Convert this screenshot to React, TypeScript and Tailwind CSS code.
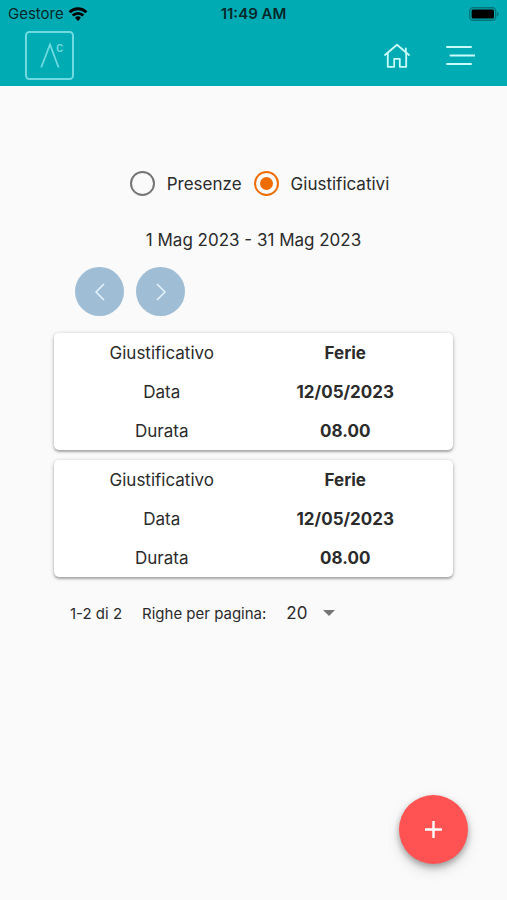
import { useState } from 'react'

interface Leave {
  id: number
  type: string
  date: string
  duration: string
}

const LEAVES: Leave[] = [
  { id: 1, type: 'Ferie', date: '12/05/2023', duration: '08.00' },
  { id: 2, type: 'Ferie', date: '12/05/2023', duration: '08.00' },
]

const VIEWS = ['Presenze', 'Giustificativi']

function StatusBar() {
  return (
    <div className="grid h-7 grid-cols-3 items-center px-2 text-[15px] text-[#06282b]">
      <div className="flex items-center gap-1">
        <span>Gestore</span>
        <svg viewBox="0 0 20 14" className="h-[14px] w-5" fill="none" stroke="#000" strokeWidth="2.8">
          <path d="M1.6 5.200a12 12 0 0 1 16.8 0" />
          <path d="M4.700 8.600a7.600 7.600 0 0 1 10.600 0" />
          <path d="M7 10.800a4.300 4.300 0 0 1 6 0L10 14z" fill="#000" stroke="none" />
        </svg>
      </div>
      <span className="text-center font-semibold">11:49 AM</span>
      <svg viewBox="0 0 30 14" className="h-[14px] w-[30px] justify-self-end">
        <rect x="0.7" y="0.7" width="26" height="12.6" rx="3.6" fill="none" stroke="#04747a" strokeWidth="1.4" />
        <rect x="2.6" y="2.4" width="22.4" height="9.2" rx="1.600" fill="#000" />
        <path d="M28 5v4c1-.4 1.7-1.1 1.7-2S29 5.400 28 5z" fill="#04747a" />
      </svg>
    </div>
  )
}

function Logo() {
  return (
    <svg viewBox="0 0 49 49" className="h-[49px] w-[49px]" fill="none" stroke="#6fdbe0">
      <rect x="1" y="1" width="47" height="47" rx="3.500" strokeWidth="2" />
      <path d="M16.200 36.500 25 13.500l8.600 23" strokeWidth="1.800" />
      <text x="31" y="20.500" fontSize="13" fontWeight="500" fill="#6fdbe0" stroke="none">c</text>
    </svg>
  )
}

function NavBar() {
  return (
    <div className="flex h-[58px] items-center justify-between pr-8 pb-[3px] pl-[25px]">
      <a href="#" aria-label="AC">
        <Logo />
      </a>
      <div className="flex items-center gap-[34px]">
        <a href="#" aria-label="Home">
          <svg viewBox="0 0 28 27" className="h-[27px] w-7" fill="none" stroke="#c9fbfd" strokeWidth="1.8" strokeLinecap="round" strokeLinejoin="round">
            <path d="M2 13 14 2.800 26 13" />
            <path d="M4.800 11v13.800h6.400v-7.900h5.600v7.900h6.400V11" />
            <path d="M22.800 9.500V6.500" />
          </svg>
        </a>
        <button type="button" aria-label="Menu">
          <svg viewBox="0 0 30 23" className="h-[23px] w-[30px]" stroke="#c9fbfd" strokeWidth="2" strokeLinecap="round">
            <path d="M2 3h24M5.500 11.500h24M2 20h24" />
          </svg>
        </button>
      </div>
    </div>
  )
}

function LeaveCard({ leave }: { leave: Leave }) {
  const rows = [
    { label: 'Giustificativo', value: leave.type },
    { label: 'Data', value: leave.date },
    { label: 'Durata', value: leave.duration },
  ]

  return (
    <div className="rounded-[5px] bg-white px-4 shadow-[0_1px_4px_rgba(0,0,0,0.25),0_2px_2px_rgba(0,0,0,0.2)]">
      <table className="w-full table-fixed text-center">
        <tbody>
          {rows.map((row) => (
            <tr key={row.label} className="h-[39px]">
              <th scope="row" className="font-normal">{row.label}</th>
              <td className="font-bold">{row.value}</td>
            </tr>
          ))}
        </tbody>
      </table>
    </div>
  )
}

export default function App() {
  const [view, setView] = useState('Giustificativi')
  const [pageSize, setPageSize] = useState('20')

  return (
    <div className="min-h-screen bg-[#fafafa] font-['Inter',sans-serif] text-[17px] leading-6 text-[#2b2b2b]">
      <header className="bg-[#00abb3]">
        <StatusBar />
        <NavBar />
      </header>

      <main className="px-[54px] pt-[85px]">
        <div className="flex justify-center gap-3 pl-3" role="radiogroup" aria-label="Vista">
          {VIEWS.map((name) => (
            <label key={name} className="flex items-center gap-3">
              <input
                type="radio"
                name="view"
                checked={view === name}
                onChange={() => setView(name)}
                className="grid size-[25px] appearance-none place-items-center rounded-full border-2 border-[#757575] before:size-[13px] before:rounded-full checked:border-[#ef6c00] checked:before:bg-[#ef6c00]"
              />
              <span>{name}</span>
            </label>
          ))}
        </div>

        <p className="mt-8 text-center">1 Mag 2023 - 31 Mag 2023</p>

        <div className="mt-[15px] flex gap-3 px-[21px]">
          <button type="button" aria-label="Mese precedente" className="grid size-[49px] place-items-center rounded-full bg-[#9fbdd4]">
            <svg viewBox="0 0 10 18" className="h-[18px] w-[10px]" fill="none" stroke="#e6f6ff" strokeWidth="1.500">
              <path d="M9 1 1 9l8 8" />
            </svg>
          </button>
          <button type="button" aria-label="Mese successivo" className="grid size-[49px] place-items-center rounded-full bg-[#9fbdd4]">
            <svg viewBox="0 0 10 18" className="h-[18px] w-[10px]" fill="none" stroke="#e6f6ff" strokeWidth="1.500">
              <path d="m1 1 8 8-8 8" />
            </svg>
          </button>
        </div>

        <div className="mt-[17px] flex flex-col gap-[10px]">
          {LEAVES.map((leave) => (
            <LeaveCard key={leave.id} leave={leave} />
          ))}
        </div>

        <div className="mt-6 flex items-center px-4 text-[15px]">
          <span>1-2 di 2</span>
          <label htmlFor="page-size" className="ml-5">Righe per pagina:</label>
          <div className="relative ml-5">
            <select
              id="page-size"
              value={pageSize}
              onChange={(e) => setPageSize(e.target.value)}
              className="w-[49px] appearance-none bg-transparent text-[17px]"
            >
              <option>10</option>
              <option>20</option>
              <option>50</option>
            </select>
            <svg viewBox="0 0 12 6" className="pointer-events-none absolute top-[9px] right-0 h-[6px] w-3" fill="#757575">
              <path d="M0 0h12L6 6z" />
            </svg>
          </div>
        </div>
      </main>

      <button
        type="button"
        aria-label="Aggiungi"
        className="fixed right-[39px] bottom-9 grid size-[69px] place-items-center rounded-full bg-[#ff5252] shadow-[0_3px_6px_rgba(0,0,0,0.3),0_6px_14px_rgba(0,0,0,0.15)]"
      >
        <svg viewBox="0 0 17 17" className="size-[17px]" stroke="#fff" strokeWidth="2.400">
          <path d="M8.500 0v17M0 8.500h17" />
        </svg>
      </button>
    </div>
  )
}
